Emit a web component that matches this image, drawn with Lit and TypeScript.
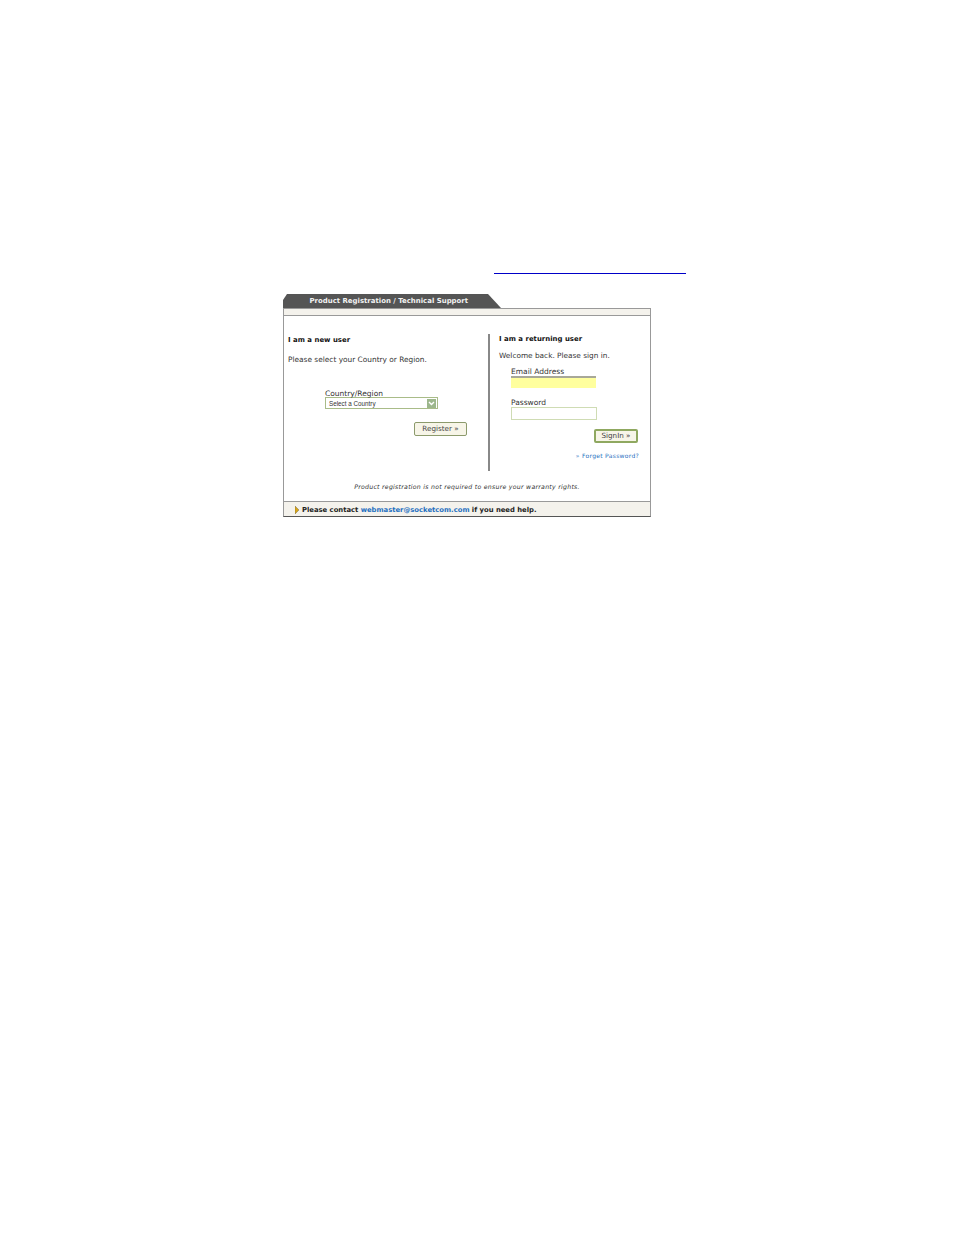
import { LitElement, html, css } from "lit";
import { customElement } from "lit/decorators.js";

@customElement("app-root")
export class AppRoot extends LitElement {
  static styles = css`
    :host { display: block; width: 954px; height: 1235px; background: #fff; overflow: hidden;
      font-family: "DejaVu Sans", Verdana, sans-serif; color: #222; font-size: 7.5px; }
    .rule { height: 1px; width: 192px; background: #0000c8; margin: 273px 0 0 494px; }
    .wrap { width: 368px; margin: 20px 0 0 283px; }
    .tab { height: 14px; width: 218px; background: #555; color: #f2f2f2; font-weight: bold; font-size: 6.95px;
      line-height: 14px; padding-left: 26.5px; box-sizing: border-box; white-space: nowrap;
      clip-path: polygon(0 100%, 0 6px, 4px 0, 205px 0, 218px 100%); }
    .panel { border: 1px solid #999; border-bottom-color: #555; height: 209px; box-sizing: border-box; display: flex; flex-direction: column; }
    .band { height: 6px; background: #f4f2ec; border-bottom: 1px solid #999; flex: none; }
    .cols { display: flex; height: 137px; margin-top: 18px; flex: none; }
    .left { width: 204px; flex: none; padding: 1px 0 0 4px; box-sizing: border-box; }
    .right { flex: 1; border-left: 2px solid #888; padding: 0 0 0 9px; position: relative; }
    .h { font-weight: bold; font-size: 6.9px; line-height: 10px; white-space: nowrap; letter-spacing: 0.03px; color: #111; }
    .p { font-size: 7.4px; line-height: 10px; margin-top: 10px; white-space: nowrap; color: #333; }
    .right .p { margin-top: 7px; font-size: 7.35px; }
    .field { margin: 24px 0 0 37px; }
    .lab { font-size: 7.5px; line-height: 9px; white-space: nowrap; color: #333; }
    .sel { width: 113px; height: 12px; box-sizing: border-box; border: 1px solid #a9bc88; display: flex; align-items: center; justify-content: space-between;
      font-family: "Liberation Sans", Arial, sans-serif; font-size: 6.3px; padding: 0 1px 0 3px; color: #333; margin-top: -1px; }
    .arr { width: 9px; height: 9px; background: #9db78c; display: flex; align-items: center; justify-content: center; }
    .btn-row { display: flex; justify-content: flex-end; padding-right: 21px; margin-top: 13px; }
    .btn { height: 14px; box-sizing: border-box; border: 1px solid #8c9a6c; border-radius: 2px; background: #f7f5e8; font-size: 7.2px; line-height: 12px; text-align: center; color: #444; white-space: nowrap; }
    .reg { width: 53px; }
    .form { margin-left: 12px; }
    .inp { width: 86px; height: 13px; box-sizing: border-box; }
    .email { background: #ffff9e; border-top: 2px solid #a8a898; height: 12px; width: 85px; }
    .pw { border: 1px solid #cfdcb4; background: #fff; }
    .f2 { margin-top: 10px; }
    .f1 { margin-top: 6px; }
    .sign-row { display: flex; justify-content: flex-end; padding-right: 12px; margin-top: 9px; }
    .sign { width: 44px; border: 2px solid #8fa860; line-height: 10px; }
    .forgot-row { display: flex; justify-content: flex-end; padding-right: 11px; margin-top: 9px; }
    .forgot { color: #1f6fc0; font-size: 6px; line-height: 8px; letter-spacing: 0.3px; white-space: nowrap; }
    .note { text-align: center; font-style: italic; font-size: 6.2px; line-height: 8px; letter-spacing: 0.27px; margin-top: 12px; color: #333; white-space: nowrap; }
    .foot { margin-top: auto; height: 13px; padding-top: 1px; background: #f4f2ec; border-top: 1px solid #999; display: flex; align-items: center; padding-left: 11px;
      font-weight: bold; font-size: 6.82px; color: #222; white-space: nowrap; box-sizing: content-box; flex: none; gap: 3px; }
    .foot a { color: #1f6fc0; text-decoration: none; }
    .foot svg { flex: none; }
  `;

  render() {
    return html`
      <div class="rule"></div>
      <div class="wrap">
        <div class="tab">Product Registration / Technical Support</div>
        <div class="panel">
          <div class="band"></div>
          <div class="cols">
            <div class="left">
              <div class="h">I am a new user</div>
              <div class="p">Please select your Country or Region.</div>
              <div class="field">
                <div class="lab">Country/Region</div>
                <div class="sel">
                  <span>Select a Country</span>
                  <span class="arr"><svg width="7" height="5" viewBox="0 0 7 5"><path d="M1 1l2.5 2.5L6 1" fill="none" stroke="#fff" stroke-width="1.4"/></svg></span>
                </div>
              </div>
              <div class="btn-row"><div class="btn reg">Register »</div></div>
            </div>
            <div class="right">
              <div class="h">I am a returning user</div>
              <div class="p">Welcome back. Please sign in.</div>
              <div class="form">
                <div class="lab f1">Email Address</div>
                <div class="inp email"></div>
                <div class="lab f2">Password</div>
                <div class="inp pw"></div>
              </div>
              <div class="sign-row"><div class="btn sign">SignIn »</div></div>
              <div class="forgot-row"><div class="forgot">» Forget Password?</div></div>
            </div>
          </div>
          <div class="note">Product registration is not required to ensure your warranty rights.</div>
          <div class="foot">
            <svg width="4" height="8" viewBox="0 0 4 8"><path d="M0 0l4 4-4 4z" fill="#d9a514" stroke="#555" stroke-width=".4"/></svg>
            <span>Please contact <a>webmaster@socketcom.com</a> if you need help.</span>
          </div>
        </div>
      </div>
    `;
  }
}
